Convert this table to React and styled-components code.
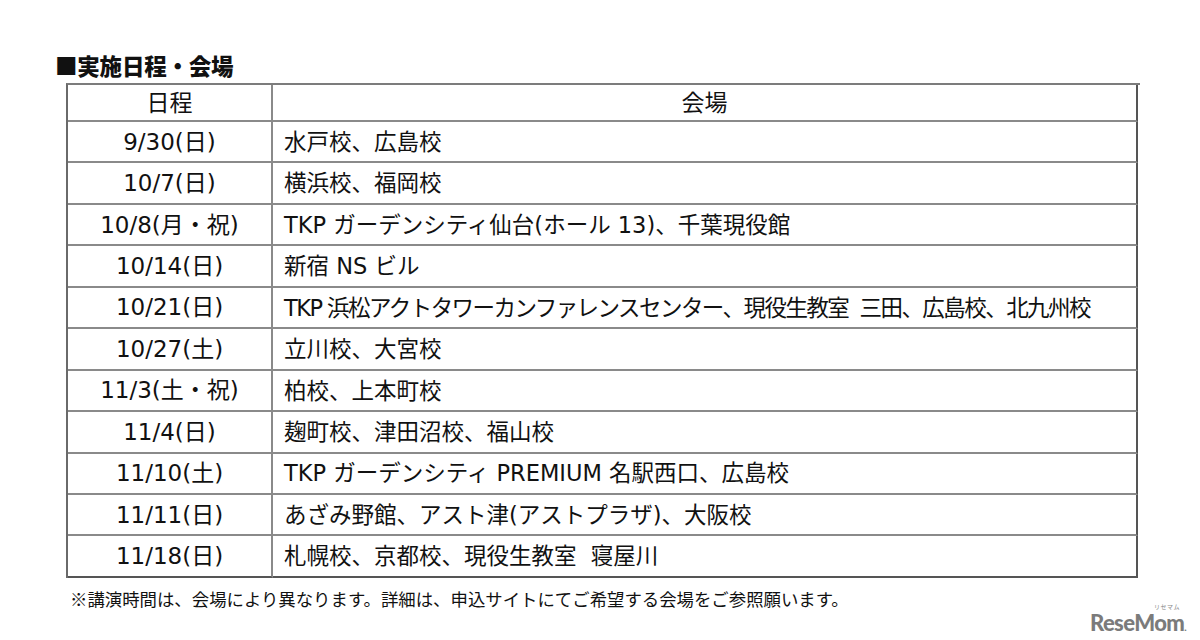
import React from "react";
import styled, { createGlobalStyle } from "styled-components";

const Global = createGlobalStyle`
  html, body { margin: 0; padding: 0; background: #fff; }
  body { font-family: "DejaVu Sans", "Noto Sans CJK JP", sans-serif; color: #111; }
`;

const Page = styled.div`
  position: relative;
  width: 1200px;
  height: 640px;
  box-sizing: border-box;
  padding: 52px 0 0 55px;
  overflow: hidden;
`;

const Title = styled.h2`
  margin: 0 0 4px 0;
  font-family: "Noto Sans CJK JP", sans-serif;
  font-weight: 900;
  font-size: 22.5px;
  line-height: 27px;
  letter-spacing: -0.2px;
  color: #111;
`;

const Table = styled.div`
  margin-left: 11px;
  width: 1072px;
  display: grid;
  grid-template-columns: 205px 865px;
  grid-template-rows: 37px repeat(11, 41.45px);
  border-top: 2px solid #7c7c7c;
  border-left: 2px solid #6a6a6a;
`;

const Cell = styled.div`
  box-sizing: border-box;
  display: flex;
  align-items: center;
  justify-content: ${(p) => (p.$center ? "center" : "flex-start")};
  padding-left: ${(p) => (p.$center ? "0" : "11px")};
  border-right: 2px solid ${(p) => (p.$last ? "#555" : "#8a8a8a")};
  border-bottom: 2px solid ${(p) => (p.$bottom ? "#555" : "#8a8a8a")};
  font-size: ${(p) => (p.$center ? "23px" : "22.5px")};
  letter-spacing: ${(p) => (p.$tight ? "-1.55px" : "0")};
  line-height: 1;
  white-space: nowrap;
  color: #111;
  padding-top: 1px;
`;

const Note = styled.p`
  margin: 10px 0 0 15px;
  font-family: "Noto Sans CJK JP", sans-serif;
  font-size: 17.4px;
  line-height: 22px;
  color: #111;
`;

const Logo = styled.div`
  position: absolute;
  right: 14px;
  bottom: 6px;
  font-family: Lato, "Noto Sans", sans-serif;
  font-weight: 900;
  font-size: 22px;
  letter-spacing: -0.6px;
  color: #7b7b7b;
  line-height: 1;
`;

const LogoKana = styled.span`
  position: absolute;
  right: 6px;
  top: -9px;
  font-family: "Noto Sans CJK JP", sans-serif;
  font-size: 6px;
  line-height: 7px;
  font-weight: 400;
  letter-spacing: 0.5px;
  color: #888;
`;

const LogoDot = styled.span`
  font-size: 10px;
`;

const rows = [
  ["9/30(日)", "水戸校、広島校"],
  ["10/7(日)", "横浜校、福岡校"],
  ["10/8(月・祝)", "TKP ガーデンシティ仙台(ホール 13)、千葉現役館"],
  ["10/14(日)", "新宿 NS ビル"],
  ["10/21(日)", "TKP 浜松アクトタワーカンファレンスセンター、現役生教室\u00a0\u00a0三田、広島校、北九州校", true],
  ["10/27(土)", "立川校、大宮校"],
  ["11/3(土・祝)", "柏校、上本町校"],
  ["11/4(日)", "麹町校、津田沼校、福山校"],
  ["11/10(土)", "TKP ガーデンシティ PREMIUM 名駅西口、広島校"],
  ["11/11(日)", "あざみ野館、アスト津(アストプラザ)、大阪校"],
  ["11/18(日)", "札幌校、京都校、現役生教室\u00a0\u00a0寝屋川"],
];

export default function App() {
  return (
    <>
      <Global />
      <Page>
        <Title>■実施日程・会場</Title>
        <Table>
          <Cell $center>日程</Cell>
          <Cell $center $last>会場</Cell>
          {rows.map(([d, v, tight], i) => {
            const bottom = i === rows.length - 1;
            return (
              <React.Fragment key={d}>
                <Cell $center $bottom={bottom}>{d}</Cell>
                <Cell $last $bottom={bottom} $tight={tight}>{v}</Cell>
              </React.Fragment>
            );
          })}
        </Table>
        <Note>
          ※講演時間は、会場により異なります。詳細は、申込サイトにてご希望する会場をご参照願います。
        </Note>
        <Logo>
          <LogoKana>リセマム</LogoKana>
          ReseMom<LogoDot>.</LogoDot>
        </Logo>
      </Page>
    </>
  );
}
